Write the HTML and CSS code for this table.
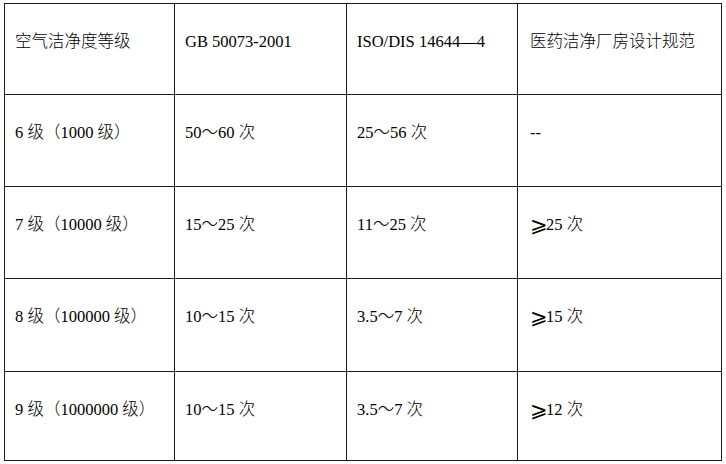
FILE: index.html
```html
<!DOCTYPE html>
<html lang="zh-CN">
<head>
<meta charset="utf-8">
<title>洁净度等级换气次数</title>
<link rel="stylesheet" href="styles.css">
</head>
<body>
<table class="grid">
  <colgroup>
    <col class="c1"><col class="c2"><col class="c3"><col class="c4">
  </colgroup>
  <tr class="r1">
    <td>空气洁净度等级</td>
    <td>GB 50073-2001</td>
    <td>ISO/DIS 14644—4</td>
    <td class="last">医药洁净厂房设计规范</td>
  </tr>
  <tr class="r2">
    <td>6 级（1000 级）</td>
    <td>50～60 次</td>
    <td>25～56 次</td>
    <td class="last">--</td>
  </tr>
  <tr class="r3">
    <td>7 级（10000 级）</td>
    <td>15～25 次</td>
    <td>11～25 次</td>
    <td class="last"><span class="ge">⩾</span>25 次</td>
  </tr>
  <tr class="r4">
    <td>8 级（100000 级）</td>
    <td>10～15 次</td>
    <td>3.5～7 次</td>
    <td class="last"><span class="ge">⩾</span>15 次</td>
  </tr>
  <tr class="r5">
    <td>9 级（1000000 级）</td>
    <td>10～15 次</td>
    <td>3.5～7 次</td>
    <td class="last"><span class="ge">⩾</span>12 次</td>
  </tr>
</table>
</body>
</html>
```

FILE: styles.css
```css
html, body {
  margin: 0;
  padding: 0;
  background: #ffffff;
}

body {
  padding: 3px 0 0 4px;
  font-family: "Liberation Serif", "Noto Sans CJK SC", serif;
  font-size: 16.5px;
  color: #000000;
}

.grid {
  border-collapse: collapse;
  table-layout: fixed;
  width: 717px;
}

.c1 { width: 170px; }
.c2 { width: 172px; }
.c3 { width: 171px; }
.c4 { width: 204px; }

.grid td {
  border: 1px solid #1c1c1c;
  vertical-align: top;
  padding: 28px 8px 0 10px;
  line-height: 20px;
  white-space: nowrap;
  font-weight: 300;
}

.grid td.last {
  border-left: 1px solid #5a5a5a;
  padding-left: 12px;
}

.r1 { height: 91px; }
.r2 { height: 92px; }
.r3 { height: 92px; }
.r4 { height: 93px; }
.r5 { height: 89px; }

.ge {
  font-family: "DejaVu Sans", "Noto Sans CJK SC", sans-serif;
  font-size: 21px;
  line-height: 20px;
  font-weight: 300;
  display: inline-block;
  width: 16px;
  vertical-align: top;
}
```
